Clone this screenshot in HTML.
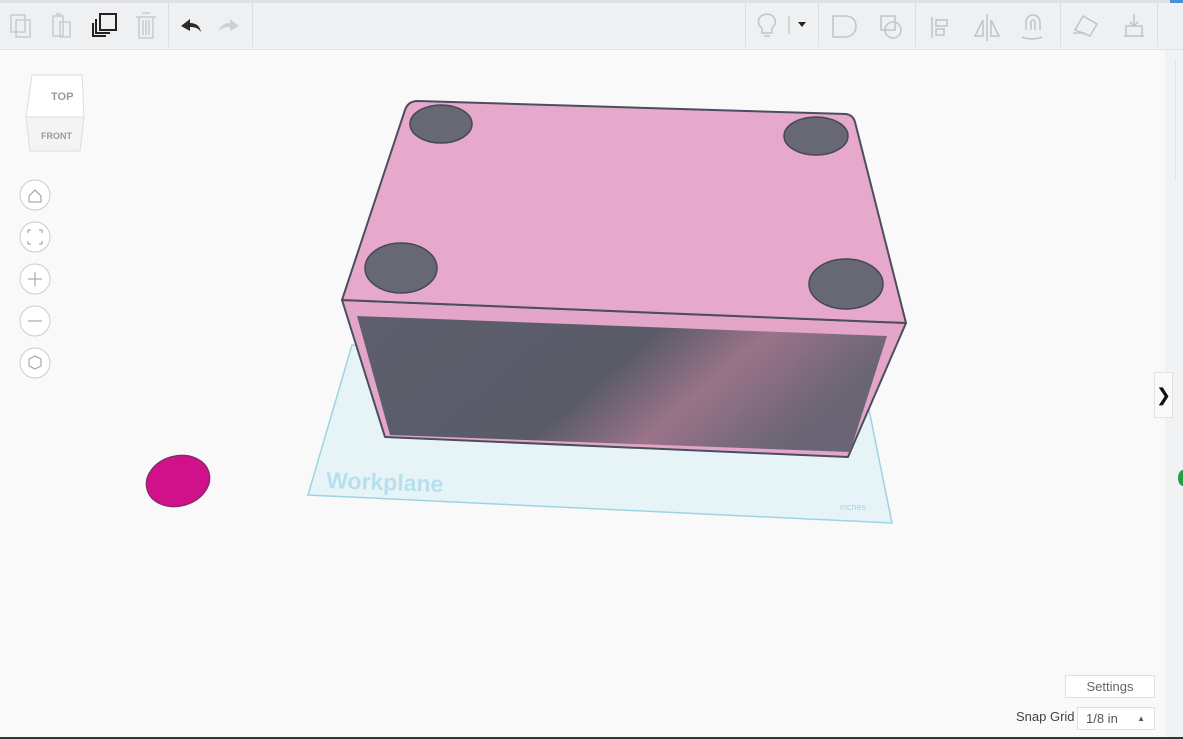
<!DOCTYPE html>
<html><head><meta charset="utf-8"><style>
html,body{margin:0;padding:0;width:1183px;height:739px;overflow:hidden;background:#f9f9f9;font-family:"Liberation Sans",sans-serif}
.top{position:absolute;left:0;top:0;width:1183px;height:3px;background:#dfe1e4}
.bar{position:absolute;left:0;top:3px;width:1183px;height:46px;background:#eef0f2;border-bottom:1px solid #e2e4e6}
.sep{position:absolute;top:3px;width:1px;height:44px;background:#dcdfe2}
.rp{position:absolute;left:1165px;top:50px;width:18px;height:689px;background:#f1f2f4}
.btn{position:absolute;background:#fff;border:1px solid #e0e0e0;color:#666;font-size:13px;text-align:center}
</style></head><body>
<div class="top"></div>
<div style="position:absolute;left:1170px;top:0;width:13px;height:3px;background:#4a90d9"></div>
<div class="bar"></div>
<div class="sep" style="left:168px"></div><div class="sep" style="left:252px"></div>
<div class="sep" style="left:745px"></div><div class="sep" style="left:818px"></div>
<div class="sep" style="left:915px"></div><div class="sep" style="left:1060px"></div><div class="sep" style="left:1157px"></div>
<svg width="1183" height="50" style="position:absolute;left:0;top:0" fill="none" stroke-width="1.5">
<g stroke="#c8ccd0"><rect x="11" y="15" width="14" height="17"/><rect x="16" y="20" width="14" height="17"/>
<rect x="53" y="16" width="10" height="20"/><rect x="60" y="22" width="10" height="15"/><path d="M56 14h4v3"/>
<path d="M136 17h20M139 17v21h14v-21M142 13h8M143 20v15M146 20v15M149 20v15"/></g>
<g stroke="#222" stroke-width="2"><rect x="100" y="14" width="16" height="16"/><path d="M96 19v14h14M93 23v13h13"/></g>
<path d="M181 26l9-7v4c6 0 10 3 11 9c-3-4-6-5-11-5v4z" fill="#2a2a2a"/>
<path d="M239 26l-9-7v4c-6 0-10 3-11 8c3-3 6-4 11-4v4z" fill="#cdd1d5"/>
<g stroke="#c0c4c8"><path d="M762 28c-5-3-6-13 5-14c10 1 10 11 5 14v5h-10z M764 36h6"/>
<path d="M833 16h12c7 0 11 4 11 10c0 7-5 11-11 11h-12z"/>
<rect x="881" y="16" width="14" height="14"/><circle cx="893" cy="30" r="8"/>
<path d="M932 17v21M936 20h11v6h-11zM936 29h8v6h-8z"/>
<path d="M987 14v27M983 20l-8 16h8zM991 20l8 16h-8z"/>
<path d="M1026 30v-8a7 7 0 0 1 14 0v8M1031 30v-8a2 2 0 0 1 4 0v8M1022 37q10 4 20 0" />
<path d="M1075 30l8-14 14 8-7 12zM1073 33h12"/>
<path d="M1124 36h20M1126 36v-10h16v10M1134 14v12M1130 22l4 4 4-4"/></g>
<path d="M798 22h8l-4 5z" fill="#222"/>
<path d="M789 16v18" stroke="#ccc"/>
</svg>
<div class="rp"></div>
<div style="position:absolute;left:1175px;top:60px;width:8px;height:120px;border-left:1px solid #e3e3e3"></div>
<div style="position:absolute;left:1154px;top:372px;width:17px;height:44px;background:#fafafa;border:1px solid #e2e2e2;font-size:18px;line-height:44px;text-align:center;color:#111">❯</div>
<div style="position:absolute;left:1178px;top:470px;width:10px;height:16px;border-radius:50%;background:#21a048"></div>
<svg width="80" height="90" style="position:absolute;left:22px;top:70px">
<path d="M10 5h50l2 42h-58z" fill="#fff" stroke="#ddd"/>
<path d="M4 47h58l-4 34h-50z" fill="#f4f4f4" stroke="#ddd"/>
<text x="29" y="30" font-size="11" font-weight="bold" fill="#999">TOP</text>
<text x="19" y="69" font-size="9" font-weight="bold" fill="#999">FRONT</text>
</svg>
<svg width="40" height="210" style="position:absolute;left:16px;top:176px" fill="none" stroke="#999">
<circle cx="19" cy="19" r="15" fill="#fff" stroke="#ccc"/><circle cx="19" cy="61" r="15" fill="#fff" stroke="#ccc"/>
<circle cx="19" cy="103" r="15" fill="#fff" stroke="#ccc"/><circle cx="19" cy="145" r="15" fill="#fff" stroke="#ccc"/><circle cx="19" cy="187" r="15" fill="#fff" stroke="#ccc"/>
<path d="M13 20l6-6 6 6v6h-12z"/><path d="M12 57v-3h3M23 54h3v3M26 65v3h-3M15 68h-3v-3"/>
<path d="M19 96v14M12 103h14"/><path d="M12 145h14"/><path d="M19 180l6 3v7l-6 3-6-3v-7z"/>
</svg>
<svg width="1183" height="739" style="position:absolute;left:0;top:0">
<defs><linearGradient id="g" x1="0" y1="0" x2="1" y2="0.3"><stop offset="0" stop-color="#5e5f6c"/><stop offset="0.55" stop-color="#5a5b68"/><stop offset="0.75" stop-color="#9a7389"/><stop offset="1" stop-color="#6a6574"/></linearGradient></defs>
<path d="M352 345L866 395L892 523L308 495Z" fill="#e6f4f8" stroke="#9fd3e4" stroke-width="1.5"/>
<text x="326" y="488" font-size="23" font-weight="bold" fill="#b7e0ec" transform="rotate(2 326 488)">Workplane</text>
<text x="840" y="510" font-size="9" fill="#a6d6e6">inches</text>
<path d="M342 300L906 323L848 457L385 437Z" fill="#e3a6c8" stroke="#4a4e5e" stroke-width="2" stroke-linejoin="round"/>
<path d="M357 316L887 336L850 452L390 435Z" fill="url(#g)"/>
<path d="M418 101L846 114Q853 115 855 122L906 323L342 300L405 110Q408 101 418 101Z" fill="#e6a8cb" stroke="#4a4e5e" stroke-width="2" stroke-linejoin="round"/>
<g fill="#676874" stroke="#45475a" stroke-width="1.5">
<ellipse cx="441" cy="124" rx="31" ry="19"/><ellipse cx="816" cy="136" rx="32" ry="19"/>
<ellipse cx="401" cy="268" rx="36" ry="25"/><ellipse cx="846" cy="284" rx="37" ry="25"/></g>
<ellipse cx="178" cy="481" rx="32" ry="25" fill="#d1118a" stroke="#8a2a6a" stroke-width="1.5" transform="rotate(-15 178 481)"/>
</svg>
<div class="btn" style="left:1065px;top:675px;width:88px;height:21px;line-height:21px">Settings</div>
<div style="position:absolute;left:1016px;top:709px;font-size:13px;color:#444">Snap Grid</div>
<div class="btn" style="left:1077px;top:707px;width:76px;height:21px;line-height:21px;text-align:left;color:#555"><span style="padding-left:8px">1/8 in</span><span style="position:absolute;right:9px;font-size:8px">▲</span></div>
<div style="position:absolute;left:0;top:737px;width:1183px;height:2px;background:#333"></div>
</body></html>
